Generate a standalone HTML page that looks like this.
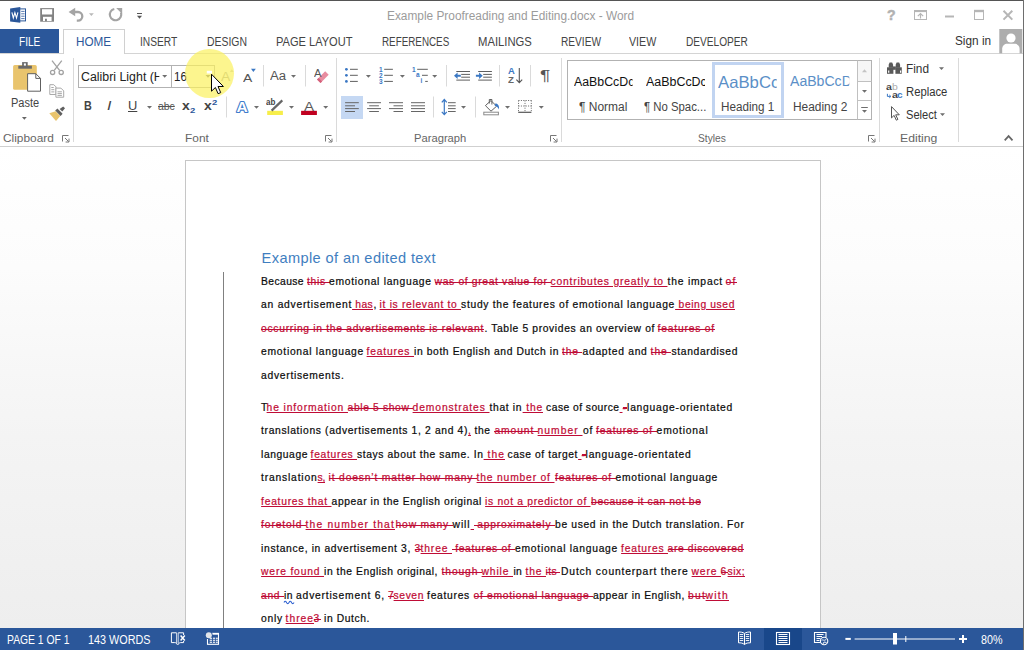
<!DOCTYPE html>
<html lang="en">
<head>
<meta charset="utf-8">
<title>Example Proofreading and Editing.docx - Word</title>
<style>
*{box-sizing:border-box;margin:0;padding:0}
html,body{width:1024px;height:650px;overflow:hidden;background:#fff}
body{font-family:"Liberation Sans",sans-serif;font-size:12px;color:#444;position:relative}
#win{position:absolute;left:0;top:0;width:1024px;height:650px;overflow:hidden;background:#fff}
#win div,#win svg{position:absolute}
.x{white-space:pre;z-index:5}
#file{left:0;top:29px;width:59px;height:24px;background:#2b579a}
#hometab{left:63px;top:29px;width:62px;height:25px;border:1px solid #d0d0d0;border-bottom:none;background:#fff}
#ribline{left:0;top:53px;width:1024px;height:1px;background:#d4d4d4}
#ribbot{left:0;top:146px;width:1024px;height:1px;background:#d0d0d0}
#docbg{left:0;top:147px;width:1024px;height:481px;background:linear-gradient(#ffffff,#fcfcfc 25%,#f4f4f4 60%,#eeeeee 100%)}
#page{left:185px;top:160px;width:636px;height:480px;background:#fff;border:1px solid #c6c6c6}
#revbar{left:223px;top:272px;width:1px;height:356px;background:#808080}
#status{left:0;top:628px;width:1024px;height:22px;background:#2b579a}
#viewsel{left:764px;top:628px;width:38px;height:22px;background:#19478a}
#topline{left:0;top:0;width:1024px;height:1px;background:#555}
#rightedge{left:1022.7px;top:0;width:1.3px;height:650px;background:#6e6e6e;z-index:9}
#hl{left:185px;top:48.6px;width:49px;height:49.4px;border-radius:50%;background:rgba(251,241,94,.7);z-index:6}
#icons{left:0;top:0;z-index:4}
#cursor{left:0;top:0;z-index:8}
.dd{background:linear-gradient(#bf0c36,#bf0c36) 0 7px/100% 1px no-repeat}
.dn,.dd,.di{-webkit-text-stroke:.22px currentColor}
.box{border:1px solid #b2b2b2;background:#fff}
</style>
</head>
<body>
<div id="win">
<div id="topline"></div>
<div id="rightedge"></div>
<div id="file"></div>
<div id="ribline"></div>
<div id="hometab"></div>
<div id="ribbot"></div>
<div class="box" style="left:78px;top:65px;width:94px;height:23px"></div>
<div class="box" style="left:171px;top:65px;width:44px;height:23px"></div>
<div class="box" style="left:567px;top:60px;width:305px;height:60px"></div>
<div style="left:341px;top:96px;width:22px;height:23px;background:#c5d8f3"></div>
<div style="left:712px;top:62px;width:72px;height:56px;border:3.5px solid #c1d4f1;background:#fff"></div>
<div id="docbg"></div>
<div id="page"></div>
<div id="revbar"></div>
<div id="status"></div>
<div id="viewsel"></div>
<div id="hl"></div>
<svg id="icons" width="1024" height="650" viewBox="0 0 1024 650" fill="none">
<!-- ===== title bar ===== -->
<g id="word-logo">
<rect x="19.500" y="8.900" width="6" height="12" fill="#fff" stroke="#2b579a" stroke-width="1"/>
<path d="M21.200 11.400h3.400M21.200 13.800h3.400M21.200 16.200h3.400M21.200 18.600h3.400" stroke="#2b579a" stroke-width=".8"/>
<path d="M10.100 8.500 20.300 7v15.800L10.100 21.400z" fill="#2b579a"/>
<path d="M11.900 12.400l1.400 5.500 1.600-5.300 1.600 5.300 1.400-5.500" stroke="#fff" stroke-width="1.100" stroke-linejoin="miter"/>
</g>
<g id="save" fill="#828282">
<path d="M40.200 8.100h13.800v13.600H40.200z"/>
<path d="M42 9.200h10.200v5.300H42z" fill="#fff"/>
<path d="M43 16.800h8.600v4.200h-8.600z" fill="#fff"/>
<path d="M45 18.800h1.900v2.400h-1.900z"/>
</g>
<g id="undo">
<path d="M68.600 12 75.200 7.800v8.400z" fill="#a4a4a4"/>
<path d="M74 12h4a4.300 4.300 0 0 1 0 8.600h-1.200" stroke="#a4a4a4" stroke-width="2.300"/>
<path d="M89 13.200h4.800l-2.400 2.800z" fill="#b8b8b8"/>
</g>
<g id="redo">
<path d="M120.900 12.500A5.700 5.700 0 1 1 114.300 8.900" stroke="#a4a4a4" stroke-width="2.100"/>
<path d="M116.200 8h6v6z" fill="#a4a4a4"/>
</g>
<g id="qat">
<path d="M137 13.5h5" stroke="#555" stroke-width="1"/>
<path d="M137 15.8h5l-2.5 3z" fill="#555"/>
</g>
<g id="winctl" stroke="#b6b6b6">
<rect x="914.5" y="10.500" width="12" height="9" stroke-width="1"/>
<path d="M914 11.300h13" stroke-width="1.600"/>
<path d="M920.500 18.600v-4.800M917.800 16.200l2.700-2.700 2.700 2.700" stroke-width="1.200"/>
<path d="M945 16.5h9" stroke-width="2"/>
<rect x="974.5" y="11" width="9" height="8.5" stroke-width="1"/>
<path d="M974 11h10" stroke-width="2.4"/>
<path d="M1003.5 10.800l8.800 8.800M1012.300 10.800l-8.800 8.800" stroke-width="2"/>
</g>
<g id="avatar">
<rect x="999.3" y="29" width="23" height="24.3" fill="#adadad"/>
<circle cx="1011" cy="38" r="4.6" fill="#fff"/>
<path d="M1002.2 53.3v-4.5c0-3 2.5-5 5-5h7.4c2.6 0 5 2 5 5v4.5z" fill="#fff"/>
</g>
<!-- ===== clipboard group ===== -->
<g id="paste">
<rect x="13.1" y="65.1" width="23.7" height="24.7" rx="1.6" fill="#e9c46d"/>
<path d="M18.3 65.7h13.6v3H18.3z" fill="#6a6a6a"/>
<path d="M22.1 62.1h5.6v4h-5.6z" fill="#6a6a6a"/>
<path d="M23.9 63.4h2v2.2h-2z" fill="#fff"/>
<path d="M27.6 73.7h8.2l4.7 4.7v12.8H27.6z" fill="#fff" stroke="#5f5f5f" stroke-width="1"/>
<path d="M35.8 73.7v4.7h4.7" stroke="#5f5f5f" stroke-width="1"/>
<path d="M21.9 117h4.9l-2.45 2.8z" fill="#666"/>
</g>
<g id="cut" stroke="#a2a2a2" stroke-width="1.3">
<path d="M52 60.6 59.6 70.4M61.8 60.6 54.2 70.4"/>
<circle cx="52.6" cy="72.4" r="2.1"/>
<circle cx="61.2" cy="72.4" r="2.1"/>
</g>
<g id="copy" stroke="#a8a8a8" stroke-width="1">
<path d="M49.8 84.7h4l2.2 2.2v7.6h-6.2z" fill="#fff"/>
<path d="M51.3 87.5h2.4M51.3 89.7h3M51.3 91.9h3"/>
<path d="M55.9 88.1h5l2.8 2.8v6.3h-7.8z" fill="#fff"/>
<path d="M57.5 91.8h4.4M57.5 93.6h4.4M57.5 95.4h4.4"/>
</g>
<g id="painter">
<path d="M49.3 113.2 55.6 111.2 60.3 116 56 120.9z" fill="#e9c46d"/>
<path d="M55.2 110.6 57.4 108.6 62.6 113.8 60.6 116z" fill="#5f5f5f"/>
<path d="M59.6 108.9 63.2 106.4 65 108.2 62.3 111.6z" fill="#5f5f5f"/>
</g>
<g id="launchers" stroke="#777" stroke-width="1">
<path transform="translate(0 0)" d="M62.5 141.5v-6h6M65 138l3.6 3.600M69 138.600v3.400h-3.400"/>
<path transform="translate(263 0)" d="M62.5 141.5v-6h6M65 138l3.6 3.600M69 138.600v3.400h-3.400"/>
<path transform="translate(488 0)" d="M62.5 141.5v-6h6M65 138l3.6 3.600M69 138.600v3.400h-3.400"/>
<path transform="translate(806 0)" d="M62.5 141.5v-6h6M65 138l3.6 3.600M69 138.600v3.400h-3.400"/>
</g>
<g id="gseps" stroke="#dadada" stroke-width="1">
<path d="M73.5 58v84M336.5 58v84M561.5 58v84M879.5 58v84M958.5 58v84"/>
<path d="M263.5 65v21.5M305.5 65v21.5M226.5 96.5v21M446.5 65v21.5M499.5 65v21.5M530.5 65v21.5M433.5 96.5v21M475.5 96.5v21"/>
</g>
<!-- dropdown arrows -->
<g id="dd" fill="#6e6e6e">
<path d="M162.2 75.0h5l-2.500 2.800z"/>
<path d="M205.5 75.0h5l-2.500 2.800z"/>
<path d="M291.0 75.0h5l-2.500 2.800z"/>
<path d="M365.9 75.0h5l-2.500 2.800z"/>
<path d="M399.9 75.0h5l-2.500 2.800z"/>
<path d="M432.2 75.0h5l-2.500 2.800z"/>
<path d="M147.0 106.0h5l-2.500 2.800z"/>
<path d="M254.0 106.0h5l-2.500 2.800z"/>
<path d="M289.0 106.0h5l-2.500 2.800z"/>
<path d="M323.2 106.0h5l-2.500 2.800z"/>
<path d="M461.0 106.0h5l-2.500 2.800z"/>
<path d="M505.0 106.0h5l-2.500 2.800z"/>
<path d="M538.8 106.0h5l-2.500 2.800z"/>
<path d="M939.0 67.2h5l-2.500 2.800z"/>
<path d="M940.0 113.2h5l-2.500 2.800z"/>
<path d="M862.0 90.0h5l-2.500 2.800z"/>
<path d="M862.0 110.0h5l-2.500 2.800z"/>
</g>
<path d="M861.2 107.5h6.6" stroke="#6e6e6e"/>
<path d="M862 72.2h5l-2.5-2.9z" fill="#c4c4c4"/>
<path d="M857.5 81.5h14M857.5 100.5h14M857.5 60.5v59" stroke="#c0c0c0"/>
<rect x="858" y="61" width="13" height="20" fill="#f6f6f6"/>
<path d="M862 72.2h5l-2.5-2.9z" fill="#c4c4c4"/>
<!-- font group icons -->
<path d="M229.9 71.9h3.8l-1.9-2.6z" fill="#c9c9c9"/>
<path d="M251 68.7h4.8l-2.4 3.4z" fill="#3b78c4"/>
<g id="clearfmt">
<path d="M317 79.6 325.2 71.2 328.7 74.7 320.5 83.1z" fill="#e88ca0"/>
<path d="M317 79.6 318.6 78 322.1 81.5 320.5 83.1z" fill="#d4607a"/>
</g>
<rect x="267.2" y="110.8" width="15.7" height="4.2" fill="#f7ee4a"/>
<path d="M282.3 100.4 271.6 110.6" stroke="#666" stroke-width="2.2"/>
<rect x="301.1" y="110.8" width="15.8" height="4.2" fill="#c00020"/>
<text x="242" y="112" text-anchor="middle" font-family="Liberation Sans, sans-serif" font-weight="700" font-size="15.5" fill="#fff" stroke="#3f7dcc" stroke-width="2.2" stroke-linejoin="round" paint-order="stroke" style="paint-order:stroke">A</text>
<!-- paragraph icons -->
<g id="bullets">
<circle cx="346.4" cy="69.3" r="1.4" fill="#3b78c4"/><circle cx="346.4" cy="75.3" r="1.4" fill="#3b78c4"/><circle cx="346.4" cy="81.4" r="1.4" fill="#3b78c4"/>
<path d="M350 69.3h7.8M350 75.3h7.8M350 81.4h7.8" stroke="#5f5f5f"/>
</g>
<g id="numbering">
<path d="M384.2 69.3h8.7M384.2 75.3h8.7M384.2 81.4h8.7" stroke="#5f5f5f"/>
</g>
<g id="multilevel">
<path d="M417.2 69.3h10.6M422 75.3h5.8M425.2 81.4h2.6" stroke="#5f5f5f"/>
</g>
<g id="outdent">
<path d="M456.3 71.5h13.7M461.2 74.4h8.8M461.2 77.2h8.8M456.3 80.1h13.7" stroke="#5f5f5f"/>
<path d="M454 75.8l3.6-3.2v2.2h3.2v2h-3.2v2.2z" fill="#3b78c4"/>
</g>
<g id="indent">
<path d="M478.2 71.5h13.7M483.2 74.4h8.7M483.2 77.2h8.7M478.2 80.1h13.7" stroke="#5f5f5f"/>
<path d="M482.7 75.8l-3.6-3.2v2.2h-3.2v2h3.2v2.2z" fill="#3b78c4"/>
</g>
<g id="sort">
<path d="M519.3 68v14M516.4 79.6l2.9 3.1 2.9-3.1" stroke="#555" stroke-width="1.1"/>
</g>
<g id="align" stroke="#666">
<path d="M345.1 102.7h13.7M345.1 105.8h9.9M345.1 108.6h13.7M345.1 111.5h9.9"/>
<path d="M367.1 102.7h13.9M369.2 105.8h9.7M367.1 108.6h13.9M369.2 111.5h9.7"/>
<path d="M389 102.7h14M393.5 105.8h9.5M389 108.6h14M393.5 111.5h9.5"/>
<path d="M411 102.7h14M411 105.8h14M411 108.6h14M411 111.5h14"/>
<path d="M448 102.7h7.7M448 105.8h7.7M448 108.6h7.7M448 111.5h7.7"/>
</g>
<path d="M444.3 99.8v14.6M441.8 102.4l2.5-2.9 2.5 2.9M441.8 111.8l2.5 2.9 2.5-2.9" stroke="#3b78c4" stroke-width="1.2"/>
<g id="shading">
<rect x="483.8" y="112.2" width="14.6" height="2.6" fill="#fff" stroke="#8a8a8a"/>
<path d="M491 100.6 496.6 106.2 491 111.2 485.4 105.6z" fill="#fff" stroke="#5f5f5f" stroke-width="1"/>
<path d="M489.3 103.5v-4h2.6v5" stroke="#5f5f5f" stroke-width="1"/>
<path d="M495.6 103.2c2.6 0.4 3.8 2.6 3.4 6.2-1.2-2-2.2-3-4.4-3.6z" fill="#3b78c4"/>
</g>
<g id="borders" stroke="#666">
<path d="M518.5 100.5h13M518.5 106h13M518.5 100.5v11.5M525 100.5v11.5M531.3 100.5v11.5" stroke-dasharray="1 1.4"/>
<path d="M518.2 112.3h13.2" stroke="#555" stroke-width="1.2"/>
</g>
<!-- editing -->
<g id="binoculars" fill="#595959">
<path d="M889.6 62.4h2.6l.9 2.4v3h-4.4v-3z"/>
<path d="M896.6 62.4h2.6l.9 2.4v3h-4.4v-3z"/>
<path d="M887 67.3h6.4v6.5H887z"/>
<path d="M895.4 67.3h6.4v6.5h-6.4z"/>
<path d="M893 66.4h2.8v3.4H893z"/>
<path d="M888.1 70.5h1.2v2.2h-1.2zM900 70.5h1.2v2.2H900z" fill="#fff"/>
</g>
<path d="M887.4 93.8v2.6h3M889.3 95l1.6 1.4-1.6 1.4" stroke="#3b78c4" stroke-width="1"/>
<path d="M891.5 106.6v11.3l2.6-2.5 2.2 4.8 1.6-.8-2.2-4.6h3.6z" fill="#fff" stroke="#555" stroke-width="1"/>
<path d="M1004.700 140.400l3.900-4.300 3.900 4.300" stroke="#666" stroke-width="1.700"/>
<path d="M284 602.400q1.250-2.400 2.500 0t2.500 0 2.500 0 2.500 0" stroke="#2f62d0" stroke-width="1.100"/>
<!-- ===== status bar ===== -->
<g id="proof" stroke="#fff" stroke-width="1">
<path d="M176.500 632.800h-5.100v9.800h3.400c1.100 0 2 .7 2.600 2.200"/>
<path d="M176.600 632.800v10.600M178.200 632.800v10.600" stroke-width=".8"/>
<path d="M178.300 632.800h5.300v2.200M183.600 641v1.600h-3c-1.100 0-2 .7-2.600 2.200"/>
<path d="M180.600 635.600l4.200 4.800M184.800 635.600l-4.200 4.800" stroke-width="1.500"/>
</g>
<g id="macro">
<rect x="207.500" y="634" width="11" height="10.300" stroke="#fff" stroke-width="1.100"/>
<path d="M210 633.600h9" stroke="#fff" stroke-width="1.500"/>
<circle cx="208.800" cy="635.200" r="3.900" fill="#2b579a"/>
<circle cx="208.800" cy="635.200" r="3" fill="#e2e5ea"/>
<g fill="#fff"><rect x="209.700" y="637.700" width="2.300" height="1.100"/><rect x="212.900" y="637.700" width="2.300" height="1.100"/><rect x="216" y="637.700" width="1.800" height="1.100"/>
<rect x="209.700" y="639.700" width="2.300" height="1.100"/><rect x="212.900" y="639.700" width="2.300" height="1.100"/><rect x="216" y="639.700" width="1.800" height="1.100"/>
<rect x="209.700" y="641.700" width="2.300" height="1.100"/><rect x="212.900" y="641.700" width="2.300" height="1.100"/><rect x="216" y="641.700" width="1.800" height="1.100"/></g>
</g>
<g id="readmode" stroke="#fff" stroke-width="1">
<path d="M744.500 644.500V633.400c-1.800-1.200-3.800-1.400-6-1.400v10.800c2.200 0 4.200.2 6 1.700zM744.500 633.400c1.800-1.200 3.800-1.400 6-1.400v10.800c-2.200 0-4.200.2-6 1.700"/>
<path d="M739.800 634.500h3.400M739.800 636.500h3.400M739.800 638.500h3.400M739.800 640.500h3.400M745.800 634.500h3.400M745.800 636.500h3.400M745.800 638.500h3.400M745.800 640.500h3.400" stroke-width=".9"/>
</g>
<g id="printlayout" stroke="#fff">
<rect x="776.500" y="632.500" width="13" height="12" stroke-width="1.100"/>
<path d="M778.500 634.500h9M778.500 636.500h9M778.500 638.500h9M778.500 640.500h9M778.500 642.500h9" stroke-width="1"/>
</g>
<g id="weblayout" stroke="#fff">
<path d="M820.500 642.500h-6v-10h11.500v5" stroke-width="1.100"/>
<path d="M816.500 634.500h7M816.500 636.500h5.500M816.500 638.500h4M816.500 640.500h3" stroke-width="1"/>
<circle cx="824.100" cy="641" r="3.700" fill="#2b579a" stroke-width="1.100"/>
<path d="M821.500 640.200c1.500-1 2.500 1.200 4.800-.8M823 644l1-2 2.500.5" stroke-width=".9"/>
</g>
<g id="zoom" stroke="#fff">
<path d="M845.400 638.900h5.400" stroke-width="2"/>
<path d="M854.600 639h100.400" stroke-width="1"/>
<path d="M905.800 636v6" stroke-width="1"/>
<rect x="893" y="633" width="4" height="11.500" fill="#fff" stroke="none"/>
<path d="M959 638.900h8M963 634.900v8" stroke-width="2"/>
</g>
</svg>

<svg id="cursor" width="1024" height="650" viewBox="0 0 1024 650">
<rect x="206.800" y="70.800" width="5.200" height="2.700" fill="#fff"/>
<path d="M211.500 74.200v17l3.900-3.700 2.700 6.200 2.600-1.100-2.700-6.100h5.400z" fill="#fff" stroke="#000" stroke-width="1" stroke-linejoin="miter"/>
</svg>
<div class="x" style="left:386.5px;top:8px;height:17px;line-height:17px;font-size:12px;transform-origin:0 50%;transform:scaleX(0.9887);color:#9b9b9b;">Example Proofreading and Editing.docx - Word</div>
<div class="x" style="left:18.7px;top:34px;height:17px;line-height:17px;font-size:12px;transform-origin:0 50%;transform:scaleX(0.8365);color:#fff;">FILE</div>
<div class="x" style="left:75.8px;top:34px;height:17px;line-height:17px;font-size:12px;transform-origin:0 50%;transform:scaleX(0.9750);color:#2b579a;">HOME</div>
<div class="x" style="left:139.8px;top:34px;height:17px;line-height:17px;font-size:12px;transform-origin:0 50%;transform:scaleX(0.8517);color:#444;">INSERT</div>
<div class="x" style="left:206.5px;top:34px;height:17px;line-height:17px;font-size:12px;transform-origin:0 50%;transform:scaleX(0.8693);color:#444;">DESIGN</div>
<div class="x" style="left:275.9px;top:34px;height:17px;line-height:17px;font-size:12px;transform-origin:0 50%;transform:scaleX(0.9226);color:#444;">PAGE LAYOUT</div>
<div class="x" style="left:381.5px;top:34px;height:17px;line-height:17px;font-size:12px;transform-origin:0 50%;transform:scaleX(0.8194);color:#444;">REFERENCES</div>
<div class="x" style="left:477.8px;top:34px;height:17px;line-height:17px;font-size:12px;transform-origin:0 50%;transform:scaleX(0.9397);color:#444;">MAILINGS</div>
<div class="x" style="left:560.8px;top:34px;height:17px;line-height:17px;font-size:12px;transform-origin:0 50%;transform:scaleX(0.8449);color:#444;">REVIEW</div>
<div class="x" style="left:629.2px;top:34px;height:17px;line-height:17px;font-size:12px;transform-origin:0 50%;transform:scaleX(0.8901);color:#444;">VIEW</div>
<div class="x" style="left:685.6px;top:34px;height:17px;line-height:17px;font-size:12px;transform-origin:0 50%;transform:scaleX(0.8438);color:#444;">DEVELOPER</div>
<div class="x" style="left:955.4px;top:33px;height:17px;line-height:17px;font-size:12px;transform-origin:0 50%;transform:scaleX(0.9836);color:#333;">Sign in</div>
<div class="x" style="left:886.6px;top:6px;height:19px;line-height:19px;font-size:14px;transform-origin:0 50%;transform:scaleX(1.0044);color:#b2b2b2;font-weight:700;-webkit-text-stroke:0.5px #b2b2b2;">?</div>
<div class="x" style="left:10.8px;top:95px;height:17px;line-height:17px;font-size:12px;transform-origin:0 50%;transform:scaleX(0.9189);color:#444;">Paste</div>
<div class="x" style="left:2.7px;top:130px;height:16px;line-height:16px;font-size:11.5px;transform-origin:0 50%;transform:scaleX(1.0318);color:#666;">Clipboard</div>
<div class="x" style="left:80.7px;top:69px;height:17px;line-height:17px;font-size:12px;transform-origin:0 50%;transform:scaleX(1.0308);width:75.6px;overflow:hidden;color:#222;">Calibri Light (H</div>
<div class="x" style="left:174.2px;top:69px;height:17px;line-height:17px;font-size:12px;transform-origin:0 50%;transform:scaleX(0.9581);color:#222;">16</div>
<div class="x" style="left:184.7px;top:130px;height:16px;line-height:16px;font-size:11.5px;transform-origin:0 50%;transform:scaleX(1.0341);color:#666;">Font</div>
<div class="x" style="left:84.2px;top:98px;height:17px;line-height:17px;font-size:12px;transform-origin:0 50%;transform:scaleX(0.8995);color:#444;font-weight:700;">B</div>
<div class="x" style="left:107.2px;top:98px;height:17px;line-height:17px;font-size:12px;transform-origin:0 50%;transform:scaleX(1.3250);color:#444;font-style:italic;font-family:"Liberation Serif",serif;">I</div>
<div class="x" style="left:127.7px;top:98px;height:17px;line-height:17px;font-size:12px;transform-origin:0 50%;transform:scaleX(1.0724);color:#444;text-decoration:underline;">U</div>
<div class="x" style="left:158.2px;top:99px;height:15px;line-height:15px;font-size:10.5px;transform-origin:0 50%;transform:scaleX(0.9919);color:#555;text-decoration:line-through;">abc</div>
<div class="x" style="left:182.2px;top:98px;height:17px;line-height:17px;font-size:12.5px;transform-origin:0 50%;transform:scaleX(1.1218);color:#444;font-weight:700;">x</div>
<div class="x" style="left:190.2px;top:106px;height:10px;line-height:10px;font-size:7px;transform-origin:0 50%;transform:scaleX(1.3568);color:#2b579a;font-weight:700;">2</div>
<div class="x" style="left:204.2px;top:98px;height:17px;line-height:17px;font-size:12.5px;transform-origin:0 50%;transform:scaleX(1.1218);color:#444;font-weight:700;">x</div>
<div class="x" style="left:212.2px;top:98px;height:10px;line-height:10px;font-size:7px;transform-origin:0 50%;transform:scaleX(1.3568);color:#2b579a;font-weight:700;">2</div>
<div class="x" style="left:221.1px;top:69px;height:17px;line-height:17px;font-size:12.5px;transform-origin:0 50%;transform:scaleX(1.1146);color:#a6a6a6;">A</div>
<div class="x" style="left:242.7px;top:70px;height:16px;line-height:16px;font-size:11.5px;transform-origin:0 50%;transform:scaleX(1.2122);color:#555;">A</div>
<div class="x" style="left:270.4px;top:68px;height:17px;line-height:17px;font-size:12px;transform-origin:0 50%;transform:scaleX(1.0962);color:#555;">Aa</div>
<div class="x" style="left:313.9px;top:65px;height:16px;line-height:16px;font-size:11.5px;transform-origin:0 50%;transform:scaleX(0.9776);color:#555;">A</div>
<div class="x" style="left:266.3px;top:96px;height:12px;line-height:12px;font-size:8.5px;transform-origin:0 50%;transform:scaleX(0.9474);color:#444;font-weight:700;">ab</div>
<div class="x" style="left:303.9px;top:98px;height:18px;line-height:18px;font-size:13.2px;transform-origin:0 50%;transform:scaleX(1.1481);color:#5a5a5a;">A</div>
<div class="x" style="left:413.7px;top:130px;height:16px;line-height:16px;font-size:11.5px;transform-origin:0 50%;transform:scaleX(0.9736);color:#666;">Paragraph</div>
<div class="x" style="left:507.9px;top:65px;height:12px;line-height:12px;font-size:8.8px;transform-origin:0 50%;transform:scaleX(1.0693);color:#3b78c4;font-weight:700;">A</div>
<div class="x" style="left:508.3px;top:74px;height:12px;line-height:12px;font-size:8.8px;transform-origin:0 50%;transform:scaleX(1.0977);color:#666;font-weight:700;">Z</div>
<div class="x" style="left:540.2px;top:64px;height:21px;line-height:21px;font-size:15px;transform-origin:0 50%;transform:scaleX(1.2775);color:#555;">¶</div>
<div class="x" style="left:574.2px;top:74px;height:17px;line-height:17px;font-size:12px;transform-origin:0 50%;transform:scaleX(1.0275);width:56.8px;overflow:hidden;color:#111;">AaBbCcDc</div>
<div class="x" style="left:579.2px;top:99px;height:17px;line-height:17px;font-size:12px;transform-origin:0 50%;transform:scaleX(0.9968);color:#444;">¶ Normal</div>
<div class="x" style="left:645.7px;top:74px;height:17px;line-height:17px;font-size:12px;transform-origin:0 50%;transform:scaleX(1.0360);width:56.9px;overflow:hidden;color:#111;">AaBbCcDc</div>
<div class="x" style="left:644.2px;top:99px;height:17px;line-height:17px;font-size:12px;transform-origin:0 50%;transform:scaleX(0.9466);color:#444;">¶ No Spac...</div>
<div class="x" style="left:718.2px;top:71px;height:23px;line-height:23px;font-size:16.5px;transform-origin:0 50%;transform:scaleX(1.0127);width:57.7px;overflow:hidden;color:#5b8fc7;">AaBbCc</div>
<div class="x" style="left:720.7px;top:99px;height:17px;line-height:17px;font-size:12px;transform-origin:0 50%;transform:scaleX(0.9741);color:#444;">Heading 1</div>
<div class="x" style="left:790.2px;top:72px;height:19px;line-height:19px;font-size:14px;transform-origin:0 50%;transform:scaleX(1.0054);width:58.7px;overflow:hidden;color:#5b8fc7;">AaBbCcD</div>
<div class="x" style="left:792.7px;top:99px;height:17px;line-height:17px;font-size:12px;transform-origin:0 50%;transform:scaleX(0.9923);color:#444;">Heading 2</div>
<div class="x" style="left:698.2px;top:130px;height:16px;line-height:16px;font-size:11.5px;transform-origin:0 50%;transform:scaleX(0.8874);color:#666;">Styles</div>
<div class="x" style="left:905.7px;top:61px;height:17px;line-height:17px;font-size:12px;transform-origin:0 50%;transform:scaleX(0.9853);color:#333;">Find</div>
<div class="x" style="left:905.7px;top:84px;height:17px;line-height:17px;font-size:12px;transform-origin:0 50%;transform:scaleX(0.9380);color:#333;">Replace</div>
<div class="x" style="left:905.7px;top:107px;height:17px;line-height:17px;font-size:12px;transform-origin:0 50%;transform:scaleX(0.9263);color:#333;">Select</div>
<div class="x" style="left:899.7px;top:130px;height:16px;line-height:16px;font-size:11.5px;transform-origin:0 50%;transform:scaleX(1.0605);color:#666;">Editing</div>
<div class="x" style="left:886.0px;top:80px;height:13px;line-height:13px;font-size:9.5px;transform-origin:0 50%;transform:scaleX(1.1139);color:#444;font-weight:700;">a</div>
<div class="x" style="left:892.4px;top:80px;height:13px;line-height:13px;font-size:9.5px;transform-origin:0 50%;transform:scaleX(1.0950);color:#ababab;">b</div>
<div class="x" style="left:891.7px;top:88px;height:13px;line-height:13px;font-size:9.5px;transform-origin:0 50%;transform:scaleX(1.1139);color:#444;font-weight:700;">a</div>
<div class="x" style="left:897.4px;top:88px;height:13px;line-height:13px;font-size:9.5px;transform-origin:0 50%;transform:scaleX(1.0572);color:#3b78c4;font-weight:700;">c</div>
<div class="x" style="left:6.5px;top:632px;height:17px;line-height:17px;font-size:12px;transform-origin:0 50%;transform:scaleX(0.8624);color:#fff;">PAGE 1 OF 1</div>
<div class="x" style="left:88.2px;top:632px;height:17px;line-height:17px;font-size:12px;transform-origin:0 50%;transform:scaleX(0.9011);color:#fff;">143 WORDS</div>
<div class="x" style="left:981.2px;top:632px;height:17px;line-height:17px;font-size:12px;transform-origin:0 50%;transform:scaleX(0.8947);color:#fff;">80%</div>
<div class="x" style="left:379.0px;top:65px;height:9px;line-height:9px;font-size:6.5px;color:#3b78c4;font-weight:700;">1</div>
<div class="x" style="left:379.0px;top:71px;height:9px;line-height:9px;font-size:6.5px;color:#3b78c4;font-weight:700;">2</div>
<div class="x" style="left:379.0px;top:77px;height:9px;line-height:9px;font-size:6.5px;color:#3b78c4;font-weight:700;">3</div>
<div class="x" style="left:412.0px;top:65px;height:9px;line-height:9px;font-size:6.5px;color:#3b78c4;font-weight:700;">1</div>
<div class="x" style="left:416.0px;top:70px;height:9px;line-height:9px;font-size:6.5px;color:#3b78c4;font-weight:700;">a</div>
<div class="x" style="left:420.5px;top:76px;height:9px;line-height:9px;font-size:6.5px;color:#3b78c4;font-weight:700;">i</div>
<div class="x h1" style="left:261.6px;top:248px;height:20px;line-height:20px;font-size:14.6px;letter-spacing:0.388px;color:#3f7ec0;">Example of an edited text</div>
<div class="x dn" style="left:261.1px;top:275px;height:14px;line-height:14px;font-size:10.3px;letter-spacing:0.403px;color:#0c0c0c;">Because</div>
<div class="x dd" style="left:306.9px;top:275px;height:14px;line-height:14px;font-size:10.3px;letter-spacing:0.752px;color:#bf0c36;">this </div>
<div class="x dn" style="left:329.1px;top:275px;height:14px;line-height:14px;font-size:10.3px;letter-spacing:0.709px;color:#0c0c0c;">emotional language</div>
<div class="x dd" style="left:434.6px;top:275px;height:14px;line-height:14px;font-size:10.3px;letter-spacing:0.656px;color:#bf0c36;">was of great value for </div>
<div class="x di" style="left:550.6px;top:275px;height:14px;line-height:14px;font-size:10.3px;letter-spacing:0.802px;color:#bf0c36;text-decoration:underline;">contributes greatly to </div>
<div class="x dn" style="left:667.6px;top:275px;height:14px;line-height:14px;font-size:10.3px;letter-spacing:0.788px;color:#0c0c0c;">the impact</div>
<div class="x dd" style="left:725.6px;top:275px;height:14px;line-height:14px;font-size:10.3px;letter-spacing:1.153px;color:#bf0c36;">of</div>
<div class="x dn" style="left:261.1px;top:298px;height:14px;line-height:14px;font-size:10.3px;letter-spacing:0.744px;color:#0c0c0c;">an advertisement</div>
<div class="x di" style="left:352.1px;top:298px;height:14px;line-height:14px;font-size:10.3px;letter-spacing:0.358px;color:#bf0c36;text-decoration:underline;"> has</div>
<div class="x dn" style="left:373.6px;top:298px;height:14px;line-height:14px;font-size:10.3px;letter-spacing:-0.475px;color:#0c0c0c;">,</div>
<div class="x di" style="left:379.6px;top:298px;height:14px;line-height:14px;font-size:10.3px;letter-spacing:0.675px;color:#bf0c36;text-decoration:underline;">it is relevant to </div>
<div class="x dn" style="left:461.1px;top:298px;height:14px;line-height:14px;font-size:10.3px;letter-spacing:0.696px;color:#0c0c0c;">study the features of emotional language</div>
<div class="x di" style="left:675.1px;top:298px;height:14px;line-height:14px;font-size:10.3px;letter-spacing:0.605px;color:#bf0c36;text-decoration:underline;"> being used</div>
<div class="x dd" style="left:261.1px;top:322px;height:14px;line-height:14px;font-size:10.3px;letter-spacing:0.698px;color:#bf0c36;">occurring in the advertisements is relevant</div>
<div class="x dn" style="left:484.4px;top:322px;height:14px;line-height:14px;font-size:10.3px;letter-spacing:0.632px;color:#0c0c0c;">. Table 5 provides an overview of</div>
<div class="x dd" style="left:657.6px;top:322px;height:14px;line-height:14px;font-size:10.3px;letter-spacing:0.795px;color:#bf0c36;">features of</div>
<div class="x dn" style="left:261.1px;top:345px;height:14px;line-height:14px;font-size:10.3px;letter-spacing:0.723px;color:#0c0c0c;">emotional language</div>
<div class="x di" style="left:366.6px;top:345px;height:14px;line-height:14px;font-size:10.3px;letter-spacing:0.814px;color:#bf0c36;text-decoration:underline;">features </div>
<div class="x dn" style="left:414.1px;top:345px;height:14px;line-height:14px;font-size:10.3px;letter-spacing:0.595px;color:#0c0c0c;">in both English and Dutch in</div>
<div class="x dd" style="left:562.1px;top:345px;height:14px;line-height:14px;font-size:10.3px;letter-spacing:0.803px;color:#bf0c36;">the </div>
<div class="x dn" style="left:582.6px;top:345px;height:14px;line-height:14px;font-size:10.3px;letter-spacing:0.694px;color:#0c0c0c;">adapted and</div>
<div class="x dd" style="left:650.6px;top:345px;height:14px;line-height:14px;font-size:10.3px;letter-spacing:0.928px;color:#bf0c36;">the </div>
<div class="x dn" style="left:671.6px;top:345px;height:14px;line-height:14px;font-size:10.3px;letter-spacing:0.619px;color:#0c0c0c;">standardised</div>
<div class="x dn" style="left:261.1px;top:369px;height:14px;line-height:14px;font-size:10.3px;letter-spacing:0.714px;color:#0c0c0c;">advertisements.</div>
<div class="x dn" style="left:261.1px;top:401px;height:14px;line-height:14px;font-size:10.3px;letter-spacing:-0.897px;color:#0c0c0c;">T</div>
<div class="x di" style="left:266.6px;top:401px;height:14px;line-height:14px;font-size:10.3px;letter-spacing:0.885px;color:#bf0c36;text-decoration:underline;">he information </div>
<div class="x dd" style="left:347.6px;top:401px;height:14px;line-height:14px;font-size:10.3px;letter-spacing:0.631px;color:#bf0c36;">able 5 show </div>
<div class="x di" style="left:412.6px;top:401px;height:14px;line-height:14px;font-size:10.3px;letter-spacing:0.896px;color:#bf0c36;text-decoration:underline;">demonstrates </div>
<div class="x dn" style="left:489.6px;top:401px;height:14px;line-height:14px;font-size:10.3px;letter-spacing:0.620px;color:#0c0c0c;">that in</div>
<div class="x di" style="left:522.6px;top:401px;height:14px;line-height:14px;font-size:10.3px;letter-spacing:0.803px;color:#bf0c36;text-decoration:underline;"> the</div>
<div class="x dn" style="left:546.1px;top:401px;height:14px;line-height:14px;font-size:10.3px;letter-spacing:0.459px;color:#0c0c0c;">case of source</div>
<div class="x di" style="left:619.6px;top:401px;height:14px;line-height:14px;font-size:10.3px;letter-spacing:0.025px;color:#bf0c36;text-decoration:underline;"> </div>
<div class="x dd" style="left:622.6px;top:401px;height:14px;line-height:14px;font-size:10.3px;letter-spacing:0.462px;color:#bf0c36;font-weight:700;background-size:100% 2px;background-position:0 6px;">-</div>
<div class="x dn" style="left:627.1px;top:401px;height:14px;line-height:14px;font-size:10.3px;letter-spacing:0.752px;color:#0c0c0c;">language-orientated</div>
<div class="x dn" style="left:261.1px;top:424px;height:14px;line-height:14px;font-size:10.3px;letter-spacing:0.651px;color:#0c0c0c;">translations (advertisements 1, 2 and 4)</div>
<div class="x di" style="left:468.1px;top:424px;height:14px;line-height:14px;font-size:10.3px;letter-spacing:0.025px;color:#bf0c36;text-decoration:underline;">,</div>
<div class="x dn" style="left:474.6px;top:424px;height:14px;line-height:14px;font-size:10.3px;letter-spacing:0.524px;color:#0c0c0c;">the</div>
<div class="x dd" style="left:494.4px;top:424px;height:14px;line-height:14px;font-size:10.3px;letter-spacing:0.919px;color:#bf0c36;">amount </div>
<div class="x di" style="left:537.6px;top:424px;height:14px;line-height:14px;font-size:10.3px;letter-spacing:1.017px;color:#bf0c36;text-decoration:underline;">number </div>
<div class="x dn" style="left:583.1px;top:424px;height:14px;line-height:14px;font-size:10.3px;letter-spacing:0.653px;color:#0c0c0c;">of</div>
<div class="x dd" style="left:596.1px;top:424px;height:14px;line-height:14px;font-size:10.3px;letter-spacing:0.740px;color:#bf0c36;">features of </div>
<div class="x dn" style="left:656.6px;top:424px;height:14px;line-height:14px;font-size:10.3px;letter-spacing:0.805px;color:#0c0c0c;">emotional</div>
<div class="x dn" style="left:261.1px;top:448px;height:14px;line-height:14px;font-size:10.3px;letter-spacing:0.566px;color:#0c0c0c;">language</div>
<div class="x di" style="left:310.6px;top:448px;height:14px;line-height:14px;font-size:10.3px;letter-spacing:0.702px;color:#bf0c36;text-decoration:underline;">features </div>
<div class="x dn" style="left:357.1px;top:448px;height:14px;line-height:14px;font-size:10.3px;letter-spacing:0.592px;color:#0c0c0c;">stays about the same. In</div>
<div class="x di" style="left:483.6px;top:448px;height:14px;line-height:14px;font-size:10.3px;letter-spacing:1.053px;color:#bf0c36;text-decoration:underline;"> the</div>
<div class="x dn" style="left:507.6px;top:448px;height:14px;line-height:14px;font-size:10.3px;letter-spacing:0.572px;color:#0c0c0c;">case of target</div>
<div class="x di" style="left:578.1px;top:448px;height:14px;line-height:14px;font-size:10.3px;letter-spacing:0.525px;color:#bf0c36;text-decoration:underline;"> </div>
<div class="x dd" style="left:581.6px;top:448px;height:14px;line-height:14px;font-size:10.3px;letter-spacing:0.462px;color:#bf0c36;font-weight:700;background-size:100% 2px;background-position:0 6px;">-</div>
<div class="x dn" style="left:585.6px;top:448px;height:14px;line-height:14px;font-size:10.3px;letter-spacing:0.752px;color:#0c0c0c;">language-orientated</div>
<div class="x dn" style="left:261.1px;top:471px;height:14px;line-height:14px;font-size:10.3px;letter-spacing:0.808px;color:#0c0c0c;">translation</div>
<div class="x di" style="left:317.6px;top:471px;height:14px;line-height:14px;font-size:10.3px;letter-spacing:-0.308px;color:#bf0c36;text-decoration:underline;">s,</div>
<div class="x dd" style="left:328.6px;top:471px;height:14px;line-height:14px;font-size:10.3px;letter-spacing:0.833px;color:#bf0c36;">it doesn’t matter how many </div>
<div class="x di" style="left:476.6px;top:471px;height:14px;line-height:14px;font-size:10.3px;letter-spacing:0.821px;color:#bf0c36;text-decoration:underline;">the number of </div>
<div class="x dd" style="left:555.1px;top:471px;height:14px;line-height:14px;font-size:10.3px;letter-spacing:0.740px;color:#bf0c36;">features of </div>
<div class="x dn" style="left:615.6px;top:471px;height:14px;line-height:14px;font-size:10.3px;letter-spacing:0.695px;color:#0c0c0c;">emotional language</div>
<div class="x di" style="left:261.1px;top:495px;height:14px;line-height:14px;font-size:10.3px;letter-spacing:0.735px;color:#bf0c36;text-decoration:underline;">features that </div>
<div class="x dn" style="left:331.6px;top:495px;height:14px;line-height:14px;font-size:10.3px;letter-spacing:0.586px;color:#0c0c0c;">appear in the English original</div>
<div class="x di" style="left:485.1px;top:495px;height:14px;line-height:14px;font-size:10.3px;letter-spacing:0.680px;color:#bf0c36;text-decoration:underline;">is not a predictor of </div>
<div class="x dd" style="left:591.1px;top:495px;height:14px;line-height:14px;font-size:10.3px;letter-spacing:0.595px;color:#bf0c36;">because it can not be</div>
<div class="x dd" style="left:261.1px;top:518px;height:14px;line-height:14px;font-size:10.3px;letter-spacing:0.853px;color:#bf0c36;">foretold </div>
<div class="x di" style="left:305.6px;top:518px;height:14px;line-height:14px;font-size:10.3px;letter-spacing:1.152px;color:#bf0c36;text-decoration:underline;">the number that</div>
<div class="x dd" style="left:395.6px;top:518px;height:14px;line-height:14px;font-size:10.3px;letter-spacing:0.789px;color:#bf0c36;">how many </div>
<div class="x dn" style="left:452.6px;top:518px;height:14px;line-height:14px;font-size:10.3px;letter-spacing:0.897px;color:#0c0c0c;">will</div>
<div class="x di" style="left:470.6px;top:518px;height:14px;line-height:14px;font-size:10.3px;letter-spacing:0.525px;color:#bf0c36;text-decoration:underline;"> </div>
<div class="x dd" style="left:473.6px;top:518px;height:14px;line-height:14px;font-size:10.3px;letter-spacing:0.771px;color:#bf0c36;"> approximately </div>
<div class="x dn" style="left:555.1px;top:518px;height:14px;line-height:14px;font-size:10.3px;letter-spacing:0.632px;color:#0c0c0c;">be used in the Dutch translation. For</div>
<div class="x dn" style="left:261.1px;top:542px;height:14px;line-height:14px;font-size:10.3px;letter-spacing:0.649px;color:#0c0c0c;">instance, in advertisement 3,</div>
<div class="x dd" style="left:414.6px;top:542px;height:14px;line-height:14px;font-size:10.3px;letter-spacing:0.666px;color:#bf0c36;">3</div>
<div class="x di" style="left:420.6px;top:542px;height:14px;line-height:14px;font-size:10.3px;letter-spacing:0.843px;color:#bf0c36;text-decoration:underline;">three </div>
<div class="x dd" style="left:451.6px;top:542px;height:14px;line-height:14px;font-size:10.3px;letter-spacing:0.693px;color:#bf0c36;"> features of </div>
<div class="x dn" style="left:515.1px;top:542px;height:14px;line-height:14px;font-size:10.3px;letter-spacing:0.723px;color:#0c0c0c;">emotional language</div>
<div class="x di" style="left:621.1px;top:542px;height:14px;line-height:14px;font-size:10.3px;letter-spacing:0.758px;color:#bf0c36;text-decoration:underline;">features </div>
<div class="x dd" style="left:667.6px;top:542px;height:14px;line-height:14px;font-size:10.3px;letter-spacing:0.632px;color:#bf0c36;">are discovered</div>
<div class="x di" style="left:261.1px;top:565px;height:14px;line-height:14px;font-size:10.3px;letter-spacing:0.826px;color:#bf0c36;text-decoration:underline;">were found </div>
<div class="x dn" style="left:324.1px;top:565px;height:14px;line-height:14px;font-size:10.3px;letter-spacing:0.548px;color:#0c0c0c;">in the English original,</div>
<div class="x dd" style="left:441.6px;top:565px;height:14px;line-height:14px;font-size:10.3px;letter-spacing:0.863px;color:#bf0c36;">though </div>
<div class="x di" style="left:481.6px;top:565px;height:14px;line-height:14px;font-size:10.3px;letter-spacing:0.845px;color:#bf0c36;text-decoration:underline;">while </div>
<div class="x dn" style="left:513.6px;top:565px;height:14px;line-height:14px;font-size:10.3px;letter-spacing:0.192px;color:#0c0c0c;">in</div>
<div class="x di" style="left:525.6px;top:565px;height:14px;line-height:14px;font-size:10.3px;letter-spacing:0.803px;color:#bf0c36;text-decoration:underline;">the </div>
<div class="x dd" style="left:545.6px;top:565px;height:14px;line-height:14px;font-size:10.3px;letter-spacing:0.432px;color:#bf0c36;">its </div>
<div class="x dn" style="left:561.1px;top:565px;height:14px;line-height:14px;font-size:10.3px;letter-spacing:0.835px;color:#0c0c0c;">Dutch counterpart there</div>
<div class="x di" style="left:691.6px;top:565px;height:14px;line-height:14px;font-size:10.3px;letter-spacing:0.842px;color:#bf0c36;text-decoration:underline;">were </div>
<div class="x dd" style="left:720.6px;top:565px;height:14px;line-height:14px;font-size:10.3px;letter-spacing:1.666px;color:#bf0c36;">6</div>
<div class="x di" style="left:727.6px;top:565px;height:14px;line-height:14px;font-size:10.3px;letter-spacing:0.487px;color:#bf0c36;text-decoration:underline;">six;</div>
<div class="x dd" style="left:261.1px;top:589px;height:14px;line-height:14px;font-size:10.3px;letter-spacing:0.588px;color:#bf0c36;">and </div>
<div class="x dn" style="left:284.1px;top:589px;height:14px;line-height:14px;font-size:10.3px;letter-spacing:0.442px;color:#0c0c0c;">in</div>
<div class="x dn" style="left:296.1px;top:589px;height:14px;line-height:14px;font-size:10.3px;letter-spacing:0.798px;color:#0c0c0c;">advertisement 6,</div>
<div class="x dd" style="left:388.1px;top:589px;height:14px;line-height:14px;font-size:10.3px;letter-spacing:0.166px;color:#bf0c36;">7</div>
<div class="x di" style="left:393.6px;top:589px;height:14px;line-height:14px;font-size:10.3px;letter-spacing:0.583px;color:#bf0c36;text-decoration:underline;">seven</div>
<div class="x dn" style="left:427.1px;top:589px;height:14px;line-height:14px;font-size:10.3px;letter-spacing:0.710px;color:#0c0c0c;">features</div>
<div class="x dd" style="left:473.6px;top:589px;height:14px;line-height:14px;font-size:10.3px;letter-spacing:0.691px;color:#bf0c36;">of emotional language </div>
<div class="x dn" style="left:593.1px;top:589px;height:14px;line-height:14px;font-size:10.3px;letter-spacing:0.526px;color:#0c0c0c;">appear in English,</div>
<div class="x dd" style="left:688.1px;top:589px;height:14px;line-height:14px;font-size:10.3px;letter-spacing:1.191px;color:#bf0c36;">but</div>
<div class="x di" style="left:705.6px;top:589px;height:14px;line-height:14px;font-size:10.3px;letter-spacing:1.272px;color:#bf0c36;text-decoration:underline;">with</div>
<div class="x dn" style="left:261.1px;top:612px;height:14px;line-height:14px;font-size:10.3px;letter-spacing:0.752px;color:#0c0c0c;">only</div>
<div class="x di" style="left:285.6px;top:612px;height:14px;line-height:14px;font-size:10.3px;letter-spacing:0.983px;color:#bf0c36;text-decoration:underline;">three</div>
<div class="x dd" style="left:313.6px;top:612px;height:14px;line-height:14px;font-size:10.3px;letter-spacing:1.666px;color:#bf0c36;">3</div>
<div class="x dn" style="left:324.1px;top:612px;height:14px;line-height:14px;font-size:10.3px;letter-spacing:0.584px;color:#0c0c0c;">in Dutch.</div>
</div>
</body>
</html>
